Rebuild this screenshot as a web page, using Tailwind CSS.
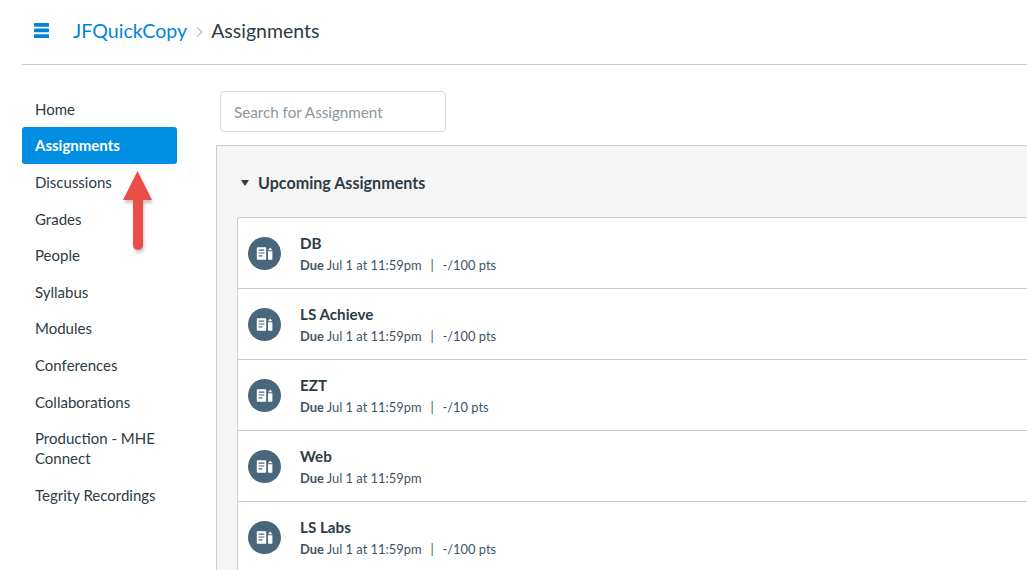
<!DOCTYPE html>
<html lang="en">
<head>
    <meta charset="UTF-8">
    <title>Assignments</title>
    <script src="https://cdn.jsdelivr.net/npm/@tailwindcss/browser@4"></script>
</head>
<body class="relative h-[570px] w-[1027px] overflow-hidden bg-white font-['Lato',sans-serif] text-[#2d3b45]">
    <header class="ml-[22px] flex h-[65px] items-center border-b border-[#c7cdd1] pb-[3px] pl-[12px]">
        <svg class="h-[15px] w-[15px] text-[#0084d8]" viewBox="0 0 15 15" fill="currentColor">
            <rect width="15" height="3.7" y="0" rx="0.5"/>
            <rect width="15" height="3.7" y="5.6" rx="0.5"/>
            <rect width="15" height="3.7" y="11.2" rx="0.5"/>
        </svg>
        <a class="ml-[24px] text-[19.6px] text-[#0084d8]">JFQuickCopy</a>
        <svg class="ml-[10px] mt-[3px] h-[10px] w-[6px] text-[#8b969e]" viewBox="0 0 6 10" fill="none" stroke="currentColor" stroke-width="1"><path d="M0.5 1 L5 5 L0.5 9"/></svg>
        <span class="ml-[8px] text-[19.5px]">Assignments</span>
    </header>

    <div class="flex">
        <nav class="ml-[22px] mt-[25.8px] w-[155px] shrink-0 text-[15px] leading-[20px]">
            <a class="block px-[13px] py-[8px] h-[36.6px]">Home</a>
            <a class="block h-[36.6px] rounded-[3px] bg-[#008ee2] px-[13px] py-[8px] font-bold text-white">Assignments</a>
            <a class="block px-[13px] py-[8px] h-[36.6px]">Discussions</a>
            <a class="block px-[13px] py-[8px] h-[36.6px]">Grades</a>
            <a class="block px-[13px] py-[8px] h-[36.6px]">People</a>
            <a class="block px-[13px] py-[8px] h-[36.6px]">Syllabus</a>
            <a class="block px-[13px] py-[8px] h-[36.6px]">Modules</a>
            <a class="block px-[13px] py-[8px] h-[36.6px]">Conferences</a>
            <a class="block px-[13px] py-[8px] h-[36.6px]">Collaborations</a>
            <a class="block px-[13px] pt-[8px] pb-[8.6px]">Production - MHE Connect</a>
            <a class="block px-[13px] py-[8px]">Tegrity Recordings</a>
        </nav>

        <main class="ml-[39px] min-w-0 flex-1">
            <div class="ml-[4px] mt-[26px] flex h-[41px] w-[226px] items-center rounded-[4px] border border-[#d5dade] px-[13px] pt-[2px] text-[15.2px] text-[#8b969e]">Search for Assignment</div>
            <section class="mt-[13px] border-l border-t border-[#c7cdd1] bg-[#f5f5f5] pl-[20px]">
                <div class="flex h-[71px] items-center pl-[4px] pt-[3px] text-[16.1px] font-bold">
                    <svg class="mr-[9px] h-[6px] w-[8px]" viewBox="0 0 8 6" fill="currentColor"><path d="M0 0H8L4 6Z"/></svg>
                    Upcoming Assignments
                </div>
                <ul class="rounded-tl-[3px] border-l border-t border-[#c7cdd1] bg-white">
                    <li class="flex h-[71px] items-center border-b border-[#c7cdd1] pl-[10px]">
                        <svg class="mt-[1px] h-[33px] w-[33px] shrink-0" viewBox="0 0 33 33"><circle cx="16.5" cy="16.5" r="16.5" fill="#48667c"/><path fill="#fff" fill-rule="evenodd" d="M9.5 10.3H17.5a.7.7 0 0 1 .7 .7V22a.7.7 0 0 1 -.7 .7H9.5a.7.7 0 0 1 -.7 -.7V11a.7.7 0 0 1 .7 -.7ZM10.6 12.6V13.8H16.4V12.6ZM10.6 15.4V16.6H16.4V15.4ZM10.6 18.2V19.4H14.4V18.2Z"/><path fill="#fff" d="M20 14.2H24.4V22a.7.7 0 0 1 -.7 .7H20.7a.7.7 0 0 1 -.7 -.7ZM22.2 10.6L24.4 13.3H20Z"/></svg>
                        <div class="ml-[19px] pb-[1px]">
                            <h3 class="text-[15.2px] font-bold leading-[20px]">DB</h3>
                            <p class="mt-[4px] text-[12.9px] leading-[16px] text-[#3f5566]"><b class="font-bold">Due</b> Jul 1 at 11:59pm <span class="mx-[5.5px]">|</span> -/100 pts</p>
                        </div>
                    </li>
                    <li class="flex h-[71px] items-center border-b border-[#c7cdd1] pl-[10px]">
                        <svg class="mt-[1px] h-[33px] w-[33px] shrink-0" viewBox="0 0 33 33"><circle cx="16.5" cy="16.5" r="16.5" fill="#48667c"/><path fill="#fff" fill-rule="evenodd" d="M9.5 10.3H17.5a.7.7 0 0 1 .7 .7V22a.7.7 0 0 1 -.7 .7H9.5a.7.7 0 0 1 -.7 -.7V11a.7.7 0 0 1 .7 -.7ZM10.6 12.6V13.8H16.4V12.6ZM10.6 15.4V16.6H16.4V15.4ZM10.6 18.2V19.4H14.4V18.2Z"/><path fill="#fff" d="M20 14.2H24.4V22a.7.7 0 0 1 -.7 .7H20.7a.7.7 0 0 1 -.7 -.7ZM22.2 10.6L24.4 13.3H20Z"/></svg>
                        <div class="ml-[19px] pb-[1px]">
                            <h3 class="text-[15.2px] font-bold leading-[20px]">LS Achieve</h3>
                            <p class="mt-[4px] text-[12.9px] leading-[16px] text-[#3f5566]"><b class="font-bold">Due</b> Jul 1 at 11:59pm <span class="mx-[5.5px]">|</span> -/100 pts</p>
                        </div>
                    </li>
                    <li class="flex h-[71px] items-center border-b border-[#c7cdd1] pl-[10px]">
                        <svg class="mt-[1px] h-[33px] w-[33px] shrink-0" viewBox="0 0 33 33"><circle cx="16.5" cy="16.5" r="16.5" fill="#48667c"/><path fill="#fff" fill-rule="evenodd" d="M9.5 10.3H17.5a.7.7 0 0 1 .7 .7V22a.7.7 0 0 1 -.7 .7H9.5a.7.7 0 0 1 -.7 -.7V11a.7.7 0 0 1 .7 -.7ZM10.6 12.6V13.8H16.4V12.6ZM10.6 15.4V16.6H16.4V15.4ZM10.6 18.2V19.4H14.4V18.2Z"/><path fill="#fff" d="M20 14.2H24.4V22a.7.7 0 0 1 -.7 .7H20.7a.7.7 0 0 1 -.7 -.7ZM22.2 10.6L24.4 13.3H20Z"/></svg>
                        <div class="ml-[19px] pb-[1px]">
                            <h3 class="text-[15.2px] font-bold leading-[20px]">EZT</h3>
                            <p class="mt-[4px] text-[12.9px] leading-[16px] text-[#3f5566]"><b class="font-bold">Due</b> Jul 1 at 11:59pm <span class="mx-[5.5px]">|</span> -/10 pts</p>
                        </div>
                    </li>
                    <li class="flex h-[71px] items-center border-b border-[#c7cdd1] pl-[10px]">
                        <svg class="mt-[1px] h-[33px] w-[33px] shrink-0" viewBox="0 0 33 33"><circle cx="16.5" cy="16.5" r="16.5" fill="#48667c"/><path fill="#fff" fill-rule="evenodd" d="M9.5 10.3H17.5a.7.7 0 0 1 .7 .7V22a.7.7 0 0 1 -.7 .7H9.5a.7.7 0 0 1 -.7 -.7V11a.7.7 0 0 1 .7 -.7ZM10.6 12.6V13.8H16.4V12.6ZM10.6 15.4V16.6H16.4V15.4ZM10.6 18.2V19.4H14.4V18.2Z"/><path fill="#fff" d="M20 14.2H24.4V22a.7.7 0 0 1 -.7 .7H20.7a.7.7 0 0 1 -.7 -.7ZM22.2 10.6L24.4 13.3H20Z"/></svg>
                        <div class="ml-[19px] pb-[1px]">
                            <h3 class="text-[15.2px] font-bold leading-[20px]">Web</h3>
                            <p class="mt-[4px] text-[12.9px] leading-[16px] text-[#3f5566]"><b class="font-bold">Due</b> Jul 1 at 11:59pm</p>
                        </div>
                    </li>
                    <li class="flex h-[71px] items-center border-b border-[#c7cdd1] pl-[10px]">
                        <svg class="mt-[1px] h-[33px] w-[33px] shrink-0" viewBox="0 0 33 33"><circle cx="16.5" cy="16.5" r="16.5" fill="#48667c"/><path fill="#fff" fill-rule="evenodd" d="M9.5 10.3H17.5a.7.7 0 0 1 .7 .7V22a.7.7 0 0 1 -.7 .7H9.5a.7.7 0 0 1 -.7 -.7V11a.7.7 0 0 1 .7 -.7ZM10.6 12.6V13.8H16.4V12.6ZM10.6 15.4V16.6H16.4V15.4ZM10.6 18.2V19.4H14.4V18.2Z"/><path fill="#fff" d="M20 14.2H24.4V22a.7.7 0 0 1 -.7 .7H20.7a.7.7 0 0 1 -.7 -.7ZM22.2 10.6L24.4 13.3H20Z"/></svg>
                        <div class="ml-[19px] pb-[1px]">
                            <h3 class="text-[15.2px] font-bold leading-[20px]">LS Labs</h3>
                            <p class="mt-[4px] text-[12.9px] leading-[16px] text-[#3f5566]"><b class="font-bold">Due</b> Jul 1 at 11:59pm <span class="mx-[5.5px]">|</span> -/100 pts</p>
                        </div>
                    </li>
                </ul>
            </section>
        </main>
    </div>

    <!-- red annotation arrow over the nav -->
    <svg class="absolute left-[118px] top-[166px] h-[92px] w-[40px]" viewBox="0 0 40 92">
        <path d="M19.5 5 L34 34 H25 V79 a5 5 0 0 1 -10 0 V34 H5 Z" fill="#000" fill-opacity="0.22" transform="translate(1 3)" style="filter:blur(1.5px)"/>
        <path d="M19.5 5 L34 34 H25 V79 a5 5 0 0 1 -10 0 V34 H5 Z" fill="#ea4e47"/>
    </svg>
</body>
</html>
